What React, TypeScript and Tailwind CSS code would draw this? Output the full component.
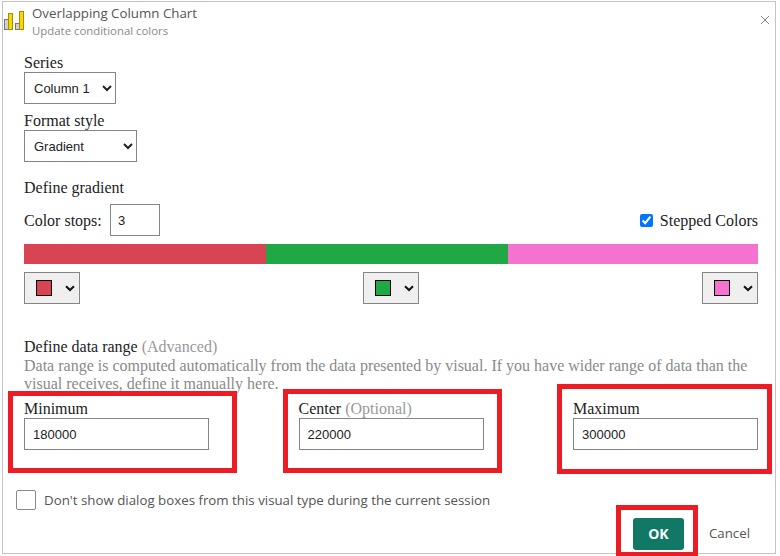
import React from 'react';

const serif = 'font-["Liberation_Serif",serif]';
const ui = "font-['Open_Sans',sans-serif]";
const field = "font-['Liberation_Sans',sans-serif] text-[13px] text-[#222]";

const stops = [
  { id: 'low', color: 'bg-[#d94452]' },
  { id: 'mid', color: 'bg-[#1fa843]' },
  { id: 'high', color: 'bg-[#f672d1]' },
];

const ChartIcon = () => (
  <svg width="21" height="21" viewBox="0 0 21 21" className="shrink-0">
    <rect x="0.5" y="8.5" width="4" height="10" fill="#d0d0d0" stroke="#777" />
    <rect x="4.5" y="2.5" width="4" height="16" fill="#f7d900" stroke="#a58f00" />
    <rect x="11.5" y="12.5" width="4" height="6" fill="#d0d0d0" stroke="#777" />
    <rect x="15.5" y="0.5" width="4" height="18" fill="#f7d900" stroke="#a58f00" />
  </svg>
);

const ColorPicker = ({ color }: { color: string }) => (
  <div className="flex h-8 w-14 items-center border border-[#858585] bg-[#efefef] pl-[11px]">
    <span className={`h-4 w-4 border border-black ${color}`} />
    <svg width="10" height="7" viewBox="0 0 10 7" className="ml-[13px]">
      <path d="M1 1.2 5 5 9 1.2" fill="none" stroke="#111" strokeWidth="2" />
    </svg>
  </div>
);

const RangeField = ({ label, hint, value }: { label: string; hint?: string; value: string }) => (
  <div className="w-[185px]">
    <div className={`${serif} h-[18px] text-[16px] leading-[18px] text-[#222]`}>
      {label} {hint && <span className="text-[#999]">{hint}</span>}
    </div>
    <input readOnly value={value} className={`block h-8 w-full border border-[#858585] px-2 ${field}`} />
  </div>
);

export default function App() {
  return (
    <div className="h-[556px] w-[780px] overflow-hidden bg-white pl-0.5 pt-px">
      <div className="relative h-[553px] w-[774px] border border-[#c4c4c4]">
        {/* Header */}
        <div className="flex h-[43px] items-start pl-[1px] pt-[9px]">
          <ChartIcon />
          <div className={`ml-[7px] -mt-[7px] ${ui}`}>
            <div className="text-[13.3px] leading-[18px] text-[#555]">Overlapping Column Chart</div>
            <div className="text-[11.4px] leading-[17px] text-[#888]">Update conditional colors</div>
          </div>
          <svg width="10" height="10" viewBox="0 0 10 10" className="absolute right-[5px] top-[13px]">
            <path d="M1 1 9 9M9 1 1 9" stroke="#777" strokeWidth="0.9" />
          </svg>
        </div>

        <div className="pl-[21px] pr-[17px]">
          {/* Series + format */}
          <div className={`${serif} mt-[8px] text-[16px] leading-[19px] text-[#222]`}>Series</div>
          <select className={`block h-8 w-[92px] border border-[#858585] pl-[5px] ${field}`}>
            <option>Column 1</option>
          </select>
          <div className={`${serif} mt-[7px] text-[16px] leading-[19px] text-[#222]`}>Format style</div>
          <select className={`block h-8 w-[113px] border border-[#858585] pl-[5px] ${field}`}>
            <option>Gradient</option>
          </select>

          {/* Gradient */}
          <div className={`${serif} mt-[16px] text-[16px] leading-[19px] text-[#222]`}>Define gradient</div>
          <div className="mt-[7px] flex h-8 items-center justify-between">
            <div className="flex items-center">
              <span className={`${serif} w-[86px] pt-0.5 text-[16px] text-[#222]`}>Color stops:</span>
              <input readOnly value="3" className={`h-8 w-[50px] border border-[#858585] px-[7px] ${field}`} />
            </div>
            <label className="flex items-center">
              <input type="checkbox" defaultChecked readOnly className="m-0 h-[13px] w-[13px]" />
              <span className={`${serif} ml-[7px] pt-0.5 text-[16px] text-[#222]`}>Stepped Colors</span>
            </label>
          </div>
          <div className="mt-2 grid h-5 grid-cols-[242px_242px_1fr]">
            {stops.map((s) => (
              <div key={s.id} className={s.color} />
            ))}
          </div>
          <div className="mt-2 flex justify-between">
            {stops.map((s) => (
              <ColorPicker key={s.id} color={s.color} />
            ))}
          </div>

          {/* Data range */}
          <div className={`${serif} mt-[33px] text-[16px] leading-[19px] text-[#222]`}>
            Define data range <span className="text-[#999]">(Advanced)</span>
          </div>
          <p className={`${serif} mt-px text-[16px] leading-[18px] text-[#8a8a8a]`}>
            Data range is computed automatically from the data presented by visual. If you have wider range of data than the
            visual receives, define it manually here.
          </p>
          <div className="mt-[7px] flex justify-between">
            <RangeField label="Minimum" value="180000" />
            <RangeField label="Center" hint="(Optional)" value="220000" />
            <RangeField label="Maximum" value="300000" />
          </div>
        </div>

        {/* Footer */}
        <div className="mt-[40px] flex items-center pl-[13px]">
          <input type="checkbox" readOnly className="h-5 w-5 appearance-none rounded-[2px] border border-[#8a8a8a] bg-white" />
          <span className={`ml-2 pt-px ${ui} text-[13.3px] text-[#555]`}>
            Don't show dialog boxes from this visual type during the current session
          </span>
        </div>
        <div className="mt-[7px] flex items-center justify-end pr-[25px]">
          <button className={`h-8 w-[51px] rounded-[3px] bg-[#117865] ${ui} text-[14px] font-bold text-white`}>OK</button>
          <span className={`ml-[25px] ${ui} text-[13.3px] font-medium text-[#555]`}>Cancel</span>
        </div>

        {/* Red annotation boxes */}
        <div className="absolute left-[5px] top-[389px] h-[82px] w-[229px] border-[5px] border-[#ed1c24]" />
        <div className="absolute left-[280px] top-[387px] h-[84px] w-[219px] border-[5px] border-[#ed1c24]" />
        <div className="absolute left-[554px] top-[382px] h-[90px] w-[215px] border-[5px] border-[#ed1c24]" />
        <div className="absolute left-[613px] top-[503px] h-[52px] w-[82px] border-[5px] border-[#ed1c24]" />
      </div>
    </div>
  );
}
